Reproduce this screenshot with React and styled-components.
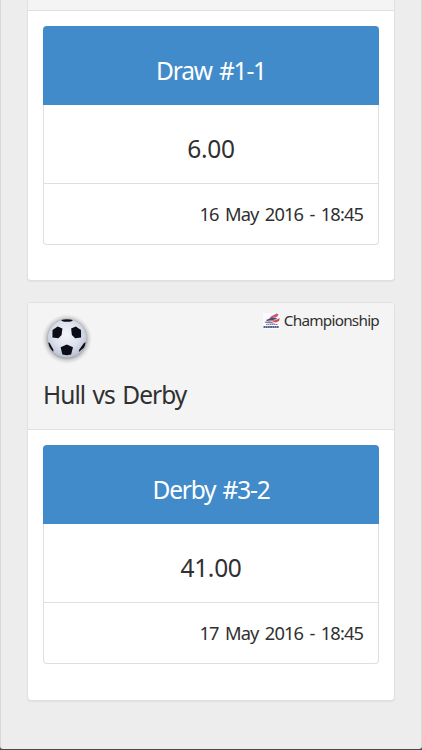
import React from "react";
import styled, { createGlobalStyle } from "styled-components";

const tips = [
  {
    id: 1,
    match: null,
    pick: "Draw #1-1",
    odds: "6.00",
    date: "16 May 2016 - 18:45",
  },
  {
    id: 2,
    match: "Hull vs Derby",
    league: "Championship",
    pick: "Derby #3-2",
    odds: "41.00",
    date: "17 May 2016 - 18:45",
  },
];

const Football = () => (
  <BallIcon viewBox="0 0 54 54">
    <defs>
      <radialGradient id="halo">
        <stop offset="0.74" stopColor="#606268" stopOpacity="0.6" />
        <stop offset="0.86" stopColor="#808080" stopOpacity="0.25" />
        <stop offset="1" stopColor="#999" stopOpacity="0" />
      </radialGradient>
      <radialGradient id="leather" cx="0.48" cy="0.4" r="0.65">
        <stop offset="0" stopColor="#f4f5fb" />
        <stop offset="0.55" stopColor="#dce0ec" />
        <stop offset="1" stopColor="#b0b8cb" />
      </radialGradient>
      <clipPath id="ballEdge">
        <circle cx="27" cy="27.5" r="19.3" />
      </clipPath>
    </defs>
    <circle cx="27" cy="28" r="25" fill="url(#halo)" />
    <circle cx="27" cy="27.5" r="19.3" fill="url(#leather)" />
    <g clipPath="url(#ballEdge)" fill="#0b0e17">
      <path d="M21.5 8h11v2.1l-3 .7h-5l-3-.7z" />
      <path d="M12.5 19l5.2-3.6 4.7 2.2-.8 6.5-3.2 3.2-6-.8z" />
      <path d="M41 19l-5.2-3.6-4.7 2.2.8 6.5 3.2 3.2 6-.8z" />
      <path d="M20.6 36.2l6.2-2.8 6.2 2.8-1.9 7.2-4.3.8-4.4-.8z" />
      <path d="M7.6 31.2l2 .9 3.8 6.7-.3 2.2-4.5-4.8z" />
      <path d="M46 31.2l-2 .9-4.8 6.7-.3 2.2 5.5-4.8z" />
    </g>
  </BallIcon>
);

const LeagueLogo = () => (
  <LeagueIcon viewBox="0 0 18 18">
    <path fill="#fbfbfd" d="M0 1h17v16H0z" />
    <path fill="#d0566a" d="M8 4.6L13.6 1.4l1.9.9-1.3 2.4-4 .9-4.4 1.6z" />
    <path fill="#4b4a72" d="M3 8l6.5-2.4 3.5.2 1 1.3-4 .8-6 1z" />
    <path fill="#d2465a" d="M6.5 8.3l5.8-.1 4.4-2.2-.6 2.9-3.4 1.5z" />
    <path fill="#7b80a4" d="M1.5 9.8l6-.6 5 2.6-3.5-.2-6.5-.6z" />
    <path
      fill="none"
      stroke="#8587a3"
      strokeWidth="1"
      strokeDasharray="1.6 .3"
      d="M3 12.5h12"
    />
    <path
      fill="none"
      stroke="#5a608c"
      strokeWidth="2.2"
      strokeDasharray="1.9 .3"
      d="M.5 15h15.5"
    />
  </LeagueIcon>
);

const App = () => {
  return (
    <>
      <GlobalStyle />
      <Screen>
        <Page>
          {tips.map((tip) => (
            <Card key={tip.id} $cut={!tip.match}>
              {tip.match ? (
                <CardHeader>
                  <HeaderTop>
                    <Football />
                    <League>
                      <LeagueLogo />
                      <LeagueName>{tip.league}</LeagueName>
                    </League>
                  </HeaderTop>
                  <Match>{tip.match}</Match>
                </CardHeader>
              ) : (
                <HeaderEdge />
              )}
              <CardBody>
                <Tip>
                  <Pick>{tip.pick}</Pick>
                  <Odds>{tip.odds}</Odds>
                  <Kickoff>{tip.date}</Kickoff>
                </Tip>
              </CardBody>
            </Card>
          ))}
        </Page>
      </Screen>
    </>
  );
};

export default App;

const GlobalStyle = createGlobalStyle`
  * {
    box-sizing: border-box;
  }
  body {
    margin: 0;
    overflow: hidden;
    color: #303030;
    font-family: "Trebuchet MS", "Noto Sans", sans-serif;
  }
`;

const Screen = styled.div`
  height: 750px;
  padding-bottom: 1px;
  background: #4b484a;
`;

const Page = styled.main`
  height: 749px;
  padding: 0 26px;
  background: #ededed;
  border-left: 1px solid #d9d9d9;
  border-right: 1px solid #d9d9d9;
  border-radius: 0 0 3px 3px;
`;

const Card = styled.section`
  width: 368px;
  height: ${(props) => (props.$cut ? "281px" : "399px")};
  margin-bottom: 21px;
  background: #fff;
  border: 1px solid #e0e0e0;
  border-top-width: ${(props) => (props.$cut ? 0 : "1px")};
  border-radius: ${(props) => (props.$cut ? "0 0 4px 4px" : "4px")};
  box-shadow: 0 1px 1px rgba(0, 0, 0, 0.05);
  overflow: hidden;
`;

const HeaderEdge = styled.div`
  height: 11px;
  background: #f4f4f4;
  border-bottom: 1px solid #e0e0e0;
`;

const CardHeader = styled.header`
  height: 127px;
  padding: 7px 15px 0 12px;
  background: #f4f4f4;
  border-bottom: 1px solid #e0e0e0;
`;

const HeaderTop = styled.div`
  display: flex;
  justify-content: space-between;
  align-items: flex-start;
  height: 65px;
`;

const BallIcon = styled.svg`
  width: 54px;
  height: 54px;
  margin-top: 1px;
`;

const League = styled.div`
  display: flex;
  align-items: center;
  height: 20px;
  gap: 3px;
`;

const LeagueIcon = styled.svg`
  width: 18px;
  height: 18px;
  margin-top: 1px;
`;

const LeagueName = styled.span`
  font-size: 15.3px;
  line-height: 20px;
  letter-spacing: -0.75px;
`;

const Match = styled.h3`
  margin: 0;
  padding-left: 3px;
  font-size: 24.5px;
  font-weight: 400;
  line-height: 40px;
  letter-spacing: -0.95px;
  word-spacing: 2px;
`;

const CardBody = styled.div`
  padding: 15px;
`;

const Tip = styled.div`
  height: 219px;
  border: 1px solid #dfdfdf;
  border-top: 0;
  border-radius: 4px;
`;

const Pick = styled.div`
  height: 79px;
  margin: 0 -1px;
  padding-top: 25px;
  color: #fff;
  font-size: 24.5px;
  line-height: 40px;
  letter-spacing: -1.2px;
  word-spacing: 2px;
  text-align: center;
  background: #428bca;
  border-radius: 4px 4px 0 0;
`;

const Odds = styled.div`
  height: 79px;
  padding-top: 24px;
  font-size: 24.5px;
  line-height: 40px;
  letter-spacing: -0.3px;
  text-align: center;
  border-bottom: 1px solid #dfdfdf;
`;

const Kickoff = styled.div`
  padding: 16px 15px 0;
  font-size: 18.3px;
  line-height: 28px;
  letter-spacing: -0.9px;
  word-spacing: 2.5px;
  text-align: right;
`;
